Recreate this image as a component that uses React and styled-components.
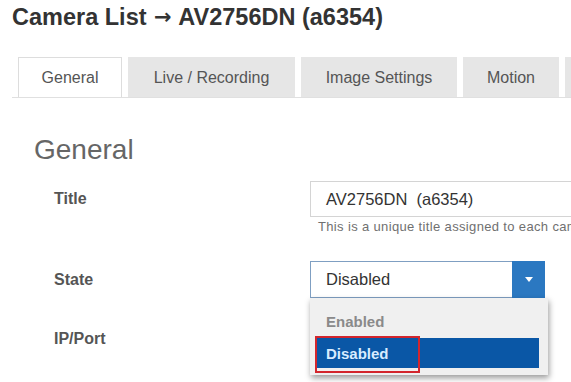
import styled, { createGlobalStyle } from "styled-components";

const GlobalStyle = createGlobalStyle`
  html, body {
    margin: 0;
    padding: 0;
    background: #ffffff;
  }
  body {
    font-family: "Liberation Sans", Arial, sans-serif;
    overflow: hidden;
  }
`;

const Page = styled.div`
  width: 571px;
  height: 382px;
  padding-left: 12px;
  box-sizing: border-box;
  overflow: hidden;
  color: #333333;
`;

const PageTitle = styled.h1`
  margin: 0;
  padding-top: 5px;
  height: 24px;
  font-size: 23.5px;
  line-height: 24px;
  font-weight: 700;
  color: #333333;
  white-space: nowrap;
  overflow: visible;
`;

const Arrow = styled.span`
  display: inline-block;
  height: 24px;
  vertical-align: top;
  font-family: "DejaVu Sans", sans-serif;
  font-size: 21px;
  line-height: 24px;
  margin: 0 1px;
`;

const TabBar = styled.div`
  display: flex;
  gap: 6px;
  margin-top: 28px;
  padding-left: 6px;
  border-bottom: 1px solid #e0e0e0;
  width: 700px;
`;

const Tab = styled.div`
  flex: none;
  width: ${(p) => p.$w}px;
  height: 40px;
  box-sizing: border-box;
  display: flex;
  align-items: center;
  justify-content: center;
  font-size: 16px;
  color: #555555;
  white-space: nowrap;
  background: ${(p) => (p.$active ? "#ffffff" : "#e6e6e6")};
  border: 1px solid ${(p) => (p.$active ? "#dddddd" : "#e6e6e6")};
  border-bottom: none;
`;

const Section = styled.div`
  padding-left: 22px;
`;

const SectionHeading = styled.h2`
  margin: 36px 0 0;
  font-size: 28px;
  line-height: 32px;
  font-weight: 400;
  color: #666666;
`;

const Form = styled.div`
  display: grid;
  grid-template-columns: 256px 320px;
  padding-left: 20px;
  margin-top: 15px;
`;

const Label = styled.div`
  font-size: 16px;
  font-weight: 700;
  color: #555555;
  height: ${(p) => p.$h}px;
  margin-top: ${(p) => p.$mt || 0}px;
  display: flex;
  align-items: center;
`;

const Field = styled.div`
  margin-top: ${(p) => p.$mt || 0}px;
  position: relative;
`;

const TextInput = styled.div`
  height: 36px;
  box-sizing: border-box;
  border: 1px solid #d4d4d4;
  padding-left: 15px;
  display: flex;
  align-items: center;
  font-size: 16.5px;
  color: #333333;
  white-space: pre;
`;

const HelpText = styled.div`
  margin-top: 2px;
  padding-left: 8px;
  font-size: 13px;
  line-height: 15px;
  letter-spacing: 0.35px;
  color: #707070;
  white-space: nowrap;
`;

const Select = styled.div`
  width: 235px;
  height: 37px;
  box-sizing: border-box;
  border: 1px solid #7f9fc2;
  display: flex;
  align-items: stretch;
`;

const SelectValue = styled.div`
  flex: 1;
  padding-left: 15px;
  display: flex;
  align-items: center;
  font-size: 16.5px;
  color: #333333;
`;

const ArrowButton = styled.div`
  width: 33px;
  margin: -1px -1px -1px 0;
  background: #2b78c1;
  display: flex;
  align-items: center;
  justify-content: center;
`;

const Caret = styled.span`
  width: 0;
  height: 0;
  border-left: 4px solid transparent;
  border-right: 4px solid transparent;
  border-top: 5px solid #ffffff;
`;

const Dropdown = styled.div`
  position: absolute;
  top: 37px;
  left: 0;
  width: 238px;
  box-sizing: border-box;
  padding: 8px 9px 7px 6px;
  background: #f0f0f0;
  box-shadow: 1px 3px 6px rgba(0, 0, 0, 0.4);
  display: flex;
  flex-direction: column;
  gap: 2px;
  z-index: 5;
`;

const Option = styled.div`
  position: relative;
  height: 30px;
  padding-left: 10px;
  display: flex;
  align-items: center;
  font-size: 15px;
  font-weight: 700;
  color: ${(p) => (p.$selected ? "#d8ecff" : "#8a8a8a")};
  background: ${(p) => (p.$selected ? "#0a57a6" : "transparent")};
`;

const Highlight = styled.span`
  position: absolute;
  left: -1px;
  top: -2px;
  width: 101px;
  height: 33px;
  border: 2px solid #d3262d;
  pointer-events: none;
`;

const tabs = [
  { name: "General", w: 104, active: true },
  { name: "Live / Recording", w: 167 },
  { name: "Image Settings", w: 156 },
  { name: "Motion", w: 96 },
  { name: "", w: 110 },
];

export default function App() {
  return (
    <>
      <GlobalStyle />
      <Page>
        <PageTitle>
          Camera List <Arrow>→</Arrow> AV2756DN (a6354)
        </PageTitle>
        <TabBar>
          {tabs.map((t, i) => (
            <Tab key={i} $w={t.w} $active={t.active}>
              {t.name}
            </Tab>
          ))}
        </TabBar>
        <Section>
          <SectionHeading>General</SectionHeading>
          <Form>
            <Label $h={36}>Title</Label>
            <Field>
              <TextInput>AV2756DN  (a6354)</TextInput>
              <HelpText>This is a unique title assigned to each camera</HelpText>
            </Field>

            <Label $h={37} $mt={27}>State</Label>
            <Field $mt={27}>
              <Select>
                <SelectValue>Disabled</SelectValue>
                <ArrowButton>
                  <Caret />
                </ArrowButton>
              </Select>
              <Dropdown>
                <Option>Enabled</Option>
                <Option $selected>
                  Disabled
                  <Highlight />
                </Option>
              </Dropdown>
            </Field>

            <Label $h={20} $mt={31}>IP/Port</Label>
            <Field $mt={31} />
          </Form>
        </Section>
      </Page>
    </>
  );
}
